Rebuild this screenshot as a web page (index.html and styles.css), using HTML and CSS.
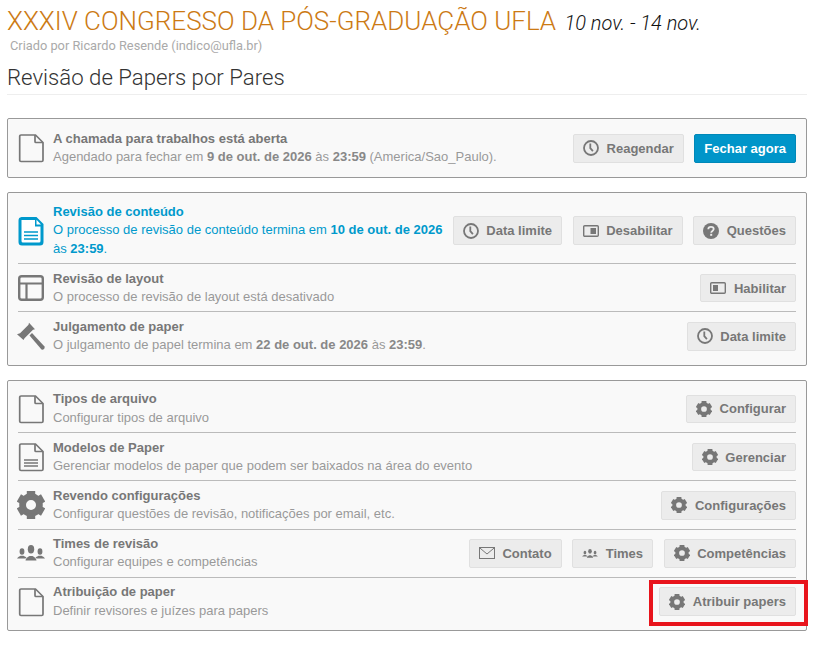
FILE: index.html
```html
<!DOCTYPE html>
<html lang="pt">
<head>
<meta charset="utf-8">
<title>Revisão de Papers por Pares</title>
<link rel="stylesheet" href="styles.css">
</head>
<body>
<svg class="defs" width="0" height="0" aria-hidden="true">
  <symbol id="file" viewBox="0 0 26 30">
    <path d="M3 2h14.500L25 9.500V27.200a1.300 1.300 0 0 1-1.300 1.300H3a1.300 1.300 0 0 1-1.300-1.300V3.300A1.300 1.300 0 0 1 3 2z" fill="none" stroke="currentColor" stroke-width="1.700"/>
    <path d="M17 2v6.500a1 1 0 0 0 1 1h7" fill="none" stroke="currentColor" stroke-width="1.700"/>
  </symbol>
  <symbol id="filetext" viewBox="0 0 26 30">
    <path d="M3 2h14.500L25 9.500V27.200a1.300 1.300 0 0 1-1.300 1.300H3a1.300 1.300 0 0 1-1.300-1.300V3.300A1.300 1.300 0 0 1 3 2z" fill="none" stroke="currentColor" stroke-width="1.700"/>
    <path d="M17 2v6.500a1 1 0 0 0 1 1h7" fill="none" stroke="currentColor" stroke-width="1.700"/>
    <path d="M6 18h14M6 21h14M6 24h14" stroke="currentColor" stroke-width="1.300"/>
  </symbol>
  <symbol id="filefill" viewBox="0 0 26 30">
    <path d="M3.500 1h15L25.500 8V26a3.500 3.500 0 0 1-3.500 3.500H4A3.500 3.500 0 0 1 .5 26V4.500A3.500 3.500 0 0 1 3.500 1z" fill="currentColor"/>
    <path d="M3.500 4h13.500v6.500h5.500V25a1.500 1.500 0 0 1-1.500 1.500H5A1.500 1.500 0 0 1 3.500 25z" fill="#fff"/>
    <path d="M6 16h14M6 19.500h14M6 23h14" stroke="currentColor" stroke-width="1.500"/>
    <path d="M18.500 3.800l4.500 4.800h-4.500z" fill="#fff"/>
  </symbol>
  <symbol id="layout" viewBox="0 0 26 26">
    <rect x="1.200" y="1.200" width="23.600" height="23.600" rx="2.500" fill="none" stroke="currentColor" stroke-width="2.400"/>
    <path d="M1 8.500h24M8.500 8.500V25" stroke="currentColor" stroke-width="2.200"/>
  </symbol>
  <symbol id="hammer" viewBox="0 0 28 28">
    <path d="M0 12.300l3-1 8.500-8.500.5-2 6 6.500-2 .5-8.500 8.500-1 1.700z" fill="currentColor"/>
    <path d="M12.500 13.500L15 11l12.500 13.500q.5 1.500-.5 2.500t-2.500.5z" fill="currentColor"/>
  </symbol>
  <symbol id="gear" viewBox="0 0 24 24">
    <circle cx="12" cy="12" r="7.200" fill="none" stroke="currentColor" stroke-width="5.800"/>
    <g fill="currentColor">
      <rect x="8.400" y="0" width="7.200" height="5"/>
      <rect x="8.400" y="0" width="7.200" height="5" transform="rotate(60 12 12)"/>
      <rect x="8.400" y="0" width="7.200" height="5" transform="rotate(120 12 12)"/>
      <rect x="8.400" y="0" width="7.200" height="5" transform="rotate(180 12 12)"/>
      <rect x="8.400" y="0" width="7.200" height="5" transform="rotate(240 12 12)"/>
      <rect x="8.400" y="0" width="7.200" height="5" transform="rotate(300 12 12)"/>
    </g>
  </symbol>
  <symbol id="users" viewBox="0 0 28 16">
    <g fill="currentColor">
      <ellipse cx="14" cy="4.200" rx="3.200" ry="4.200"/>
      <path d="M8.500 15.500c0-2.500 2.500-3.500 4-4.500h3c1.500 1 4 2 4 4.500zM19.500 13.500h8.500c-1-1.500-2.500-2-3.500-2.700h-3c-.8.800-2 1-3 1.500zM8.500 13.500H0c1-1.500 2.500-2 3.500-2.700h3c.8.800 2 1 3 1.500z"/>
      <ellipse cx="5" cy="6.500" rx="2.400" ry="3.200"/>
      <ellipse cx="23" cy="6.500" rx="2.400" ry="3.200"/>
    </g>
  </symbol>
  <symbol id="clock" viewBox="0 0 16 16">
    <circle cx="8" cy="8" r="7" fill="none" stroke="currentColor" stroke-width="1.800"/>
    <path d="M7.300 3.600v4.600l2.600 3" fill="none" stroke="currentColor" stroke-width="1.800"/>
  </symbol>
  <symbol id="toggle-on" viewBox="0 0 16 12">
    <rect x=".7" y=".7" width="14.600" height="10.600" rx="1" fill="none" stroke="currentColor" stroke-width="1.400"/>
    <rect x="7.500" y="3" width="5.500" height="6" fill="currentColor"/>
  </symbol>
  <symbol id="toggle-off" viewBox="0 0 16 12">
    <rect x=".7" y=".7" width="14.600" height="10.600" rx="1" fill="none" stroke="currentColor" stroke-width="1.400"/>
    <rect x="3" y="3" width="5" height="6" fill="currentColor"/>
  </symbol>
  <symbol id="question" viewBox="0 0 16 16">
    <circle cx="8" cy="8" r="8" fill="currentColor"/>
    <path d="M5.300 6.200c0-1.500 1.200-2.300 2.700-2.300s2.700.9 2.700 2.200c0 1.900-2.500 1.800-2.500 3.600" fill="none" stroke="#ececec" stroke-width="1.800"/>
    <rect x="7.200" y="10.800" width="2" height="2" fill="#ececec"/>
  </symbol>
  <symbol id="mail" viewBox="0 0 16 12">
    <rect x=".5" y=".5" width="15" height="11" fill="none" stroke="currentColor"/>
    <path d="M.5.700L8 7l7.500-6.300" fill="none" stroke="currentColor"/>
  </symbol>
</svg>

<header class="page-head">
  <h1 class="event-title">XXXIV CONGRESSO DA PÓS-GRADUAÇÃO UFLA <span class="event-date">10 nov. - 14 nov.</span></h1>
  <p class="creator">Criado por Ricardo Resende (indico@ufla.br)</p>
  <h2 class="page-title">Revisão de Papers por Pares</h2>
</header>

<main>
  <section class="box box-call">
    <div class="row">
      <svg class="row-icon file-icon"><use href="#file"/></svg>
      <div class="row-text">
        <div class="row-title">A chamada para trabalhos está aberta</div>
        <div class="row-desc">Agendado para fechar em <b>9 de out. de 2026</b> às <b>23:59</b> (America/Sao_Paulo).</div>
      </div>
      <div class="actions">
        <a class="btn"><svg class="btn-icon"><use href="#clock"/></svg>Reagendar</a>
        <a class="btn btn-primary">Fechar agora</a>
      </div>
    </div>
  </section>

  <section class="box">
    <div class="row row-active">
      <svg class="row-icon file-icon"><use href="#filefill"/></svg>
      <div class="row-text">
        <div class="row-title">Revisão de conteúdo</div>
        <div class="row-desc">O processo de revisão de conteúdo termina em <b>10 de out. de 2026</b> às <b>23:59</b>.</div>
      </div>
      <div class="actions">
        <a class="btn"><svg class="btn-icon"><use href="#clock"/></svg>Data limite</a>
        <a class="btn"><svg class="btn-icon toggle"><use href="#toggle-on"/></svg>Desabilitar</a>
        <a class="btn"><svg class="btn-icon"><use href="#question"/></svg>Questões</a>
      </div>
    </div>
    <div class="row">
      <svg class="row-icon layout-icon"><use href="#layout"/></svg>
      <div class="row-text">
        <div class="row-title">Revisão de layout</div>
        <div class="row-desc">O processo de revisão de layout está desativado</div>
      </div>
      <div class="actions">
        <a class="btn"><svg class="btn-icon toggle"><use href="#toggle-off"/></svg>Habilitar</a>
      </div>
    </div>
    <div class="row">
      <svg class="row-icon hammer-icon"><use href="#hammer"/></svg>
      <div class="row-text">
        <div class="row-title">Julgamento de paper</div>
        <div class="row-desc">O julgamento de papel termina em <b>22 de out. de 2026</b> às <b>23:59</b>.</div>
      </div>
      <div class="actions">
        <a class="btn"><svg class="btn-icon"><use href="#clock"/></svg>Data limite</a>
      </div>
    </div>
  </section>

  <section class="box">
    <div class="row">
      <svg class="row-icon file-icon"><use href="#file"/></svg>
      <div class="row-text">
        <div class="row-title">Tipos de arquivo</div>
        <div class="row-desc">Configurar tipos de arquivo</div>
      </div>
      <div class="actions">
        <a class="btn"><svg class="btn-icon"><use href="#gear"/></svg>Configurar</a>
      </div>
    </div>
    <div class="row">
      <svg class="row-icon file-icon"><use href="#filetext"/></svg>
      <div class="row-text">
        <div class="row-title">Modelos de Paper</div>
        <div class="row-desc">Gerenciar modelos de paper que podem ser baixados na área do evento</div>
      </div>
      <div class="actions">
        <a class="btn"><svg class="btn-icon"><use href="#gear"/></svg>Gerenciar</a>
      </div>
    </div>
    <div class="row">
      <svg class="row-icon gear-icon"><use href="#gear"/></svg>
      <div class="row-text">
        <div class="row-title">Revendo configurações</div>
        <div class="row-desc">Configurar questões de revisão, notificações por email, etc.</div>
      </div>
      <div class="actions">
        <a class="btn"><svg class="btn-icon"><use href="#gear"/></svg>Configurações</a>
      </div>
    </div>
    <div class="row">
      <svg class="row-icon users-icon"><use href="#users"/></svg>
      <div class="row-text">
        <div class="row-title">Times de revisão</div>
        <div class="row-desc">Configurar equipes e competências</div>
      </div>
      <div class="actions">
        <a class="btn"><svg class="btn-icon toggle"><use href="#mail"/></svg>Contato</a>
        <a class="btn"><svg class="btn-icon users-small"><use href="#users"/></svg>Times</a>
        <a class="btn"><svg class="btn-icon"><use href="#gear"/></svg>Competências</a>
      </div>
    </div>
    <div class="row row-marked">
      <svg class="row-icon file-icon"><use href="#file"/></svg>
      <div class="row-text">
        <div class="row-title">Atribuição de paper</div>
        <div class="row-desc">Definir revisores e juízes para papers</div>
      </div>
      <div class="actions">
        <a class="btn"><svg class="btn-icon"><use href="#gear"/></svg>Atribuir papers</a>
      </div>
      <div class="highlight"></div>
    </div>
  </section>
</main>
</body>
</html>
```

FILE: styles.css
```css
* { box-sizing: border-box; }

html, body { margin: 0; background: #fff; }

body {
  padding: 0 10px 0 7px;
  font-family: "Liberation Sans", Arial, sans-serif;
  font-size: 13px;
  color: #777;
}

.defs { position: absolute; }

.page-head {
  border-bottom: 1px solid #eee;
  height: 95px;
  margin-bottom: 23px;
}

.event-title {
  margin: 0;
  padding-top: 6px;
  font: 300 26px/30px Roboto, sans-serif;
  color: #cc7a14;
  white-space: nowrap;
}

.event-date {
  margin-left: 2px;
  font-size: 20px;
  font-style: italic;
  color: #111;
}

.creator {
  margin: 0;
  padding-top: 1px;
  padding-left: 3px;
  font: 400 12.8px/14px Roboto, sans-serif;
  color: #aaa;
}

.page-title {
  margin: 0;
  padding-top: 11px;
  font: 300 22.2px/26px Roboto, sans-serif;
  color: #333;
}

.box {
  background: #f9f9f9;
  border: 1px solid #999;
  border-radius: 2px;
  padding: 4.5px 10px 5px;
  margin-bottom: 14px;
}

.box-call { padding: 5.4px 10px; }

.row {
  position: relative;
  display: flex;
  align-items: center;
  gap: 9px;
  padding: 5.3px 0 4.7px;
  border-top: 1px solid #bbb;
}

.row:first-child { border-top: 0; }

.row-icon {
  flex: none;
  width: 26px;
  height: 30px;
  color: #777;
}

.layout-icon { width: 26px; height: 26px; }
.hammer-icon { width: 28px; height: 28px; margin-left: -1px; margin-right: -1px; }
.gear-icon { width: 28px; height: 28px; margin-left: -1px; margin-right: -1px; }
.users-icon { height: 16px; width: 28px; margin-left: -1px; margin-right: -1px; }

.row-text { flex: 1; min-width: 0; line-height: 18.6px; }

.row-title { font-weight: 700; }

.row-desc { color: #999; }
.row-desc b { color: #888; }

.row-active .row-icon,
.row-active .row-title,
.row-active .row-desc,
.row-active .row-desc b { color: #09c; }

.actions {
  flex: none;
  display: flex;
  gap: 10.6px;
}

.btn {
  display: flex;
  align-items: center;
  gap: 7.5px;
  height: 28.5px;
  padding: 0 9px;
  background: #ececec;
  border: 1px solid #e0e0e0;
  border-radius: 2px;
  font-weight: 700;
  color: #777;
  white-space: nowrap;
}

.btn-primary {
  background: #0095c9;
  border-color: #0088b8;
  color: #fff;
}

.btn-icon { flex: none; width: 16px; height: 16px; color: #777; }
.toggle { height: 12px; }
.users-small { height: 9px; }

.highlight {
  position: absolute;
  right: -11.5px;
  top: 2.5px;
  width: 159px;
  height: 46px;
  border: 4px solid #e8141c;
}
```
